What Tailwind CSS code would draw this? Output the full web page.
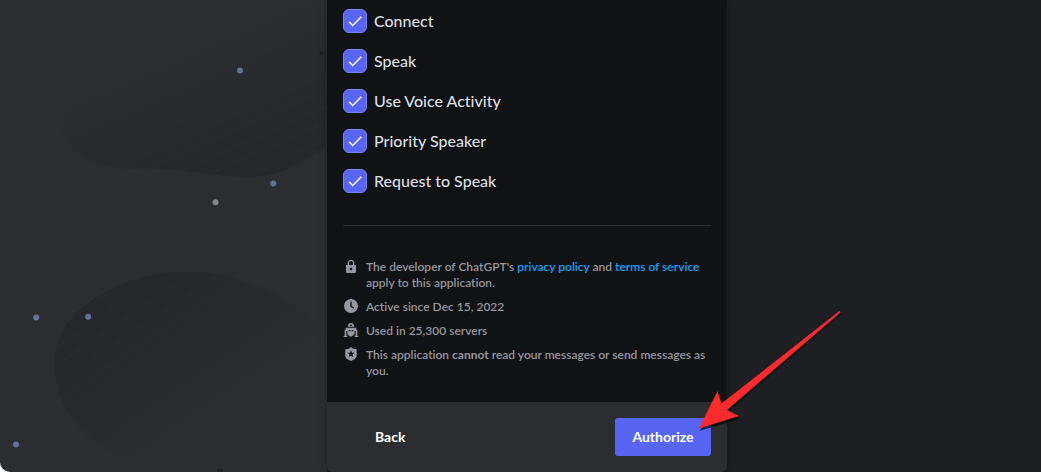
<!DOCTYPE html>
<html lang="en">
<head>
<meta charset="utf-8">
<meta name="viewport" content="width=device-width, initial-scale=1">
<title>Authorize application</title>
<script src="https://cdn.jsdelivr.net/npm/@tailwindcss/browser@4"></script>
</head>
<body class="bg-[#1e1f22]">
<div class="relative grid min-h-screen grid-cols-[327fr_400px_314fr] overflow-hidden bg-[#1e1f22] font-['Lato','Noto_Sans',sans-serif] [font-variant-ligatures:none]">
  <!-- Backdrop -->
  <div class="flex bg-white" aria-hidden="true">
  <div class="relative grow overflow-hidden rounded-bl-[10px] bg-[#2c2d31]">
    <svg class="absolute bottom-0 right-0 h-[472px] w-[327px]" viewBox="0 0 327 472" fill="none">
      <defs>
        <linearGradient id="g1" gradientUnits="userSpaceOnUse" x1="245" y1="185" x2="185" y2="45"><stop stop-color="#26272b"/><stop offset="1" stop-color="#2c2d31"/></linearGradient>
        <linearGradient id="g2" gradientUnits="userSpaceOnUse" x1="105" y1="295" x2="200" y2="430"><stop stop-color="#26272b"/><stop offset="1" stop-color="#2c2d31"/></linearGradient>
        <pattern id="s1" width="400" height="30" patternUnits="userSpaceOnUse" patternTransform="rotate(-24)"><path d="M0 4h400M0 20h400" stroke="#303135" stroke-opacity=".25" stroke-width="2"/></pattern>
        <pattern id="s2" width="400" height="30" patternUnits="userSpaceOnUse" patternTransform="rotate(-34)"><path d="M0 4h400M0 20h400" stroke="#303135" stroke-opacity=".25" stroke-width="2"/></pattern>
        <path id="b1" d="M327 0H285L60 110C55 135 75 168 130 169C180 167 212 177 250 177C283 176 303 164 327 145Z"/>
        <path id="b2" d="M54.500 368C54 325 78 308 110 289C150 269 202 267 240 280C285 294 322 318 327 345L150 465C95 455 56 415 54.500 368Z"/>
      </defs>
      <use href="#b1" fill="url(#g1)"/><use href="#b1" fill="url(#s1)"/>
      <use href="#b2" fill="url(#g2)"/><use href="#b2" fill="url(#s2)"/>
      <g fill="#64709b">
        <circle cx="240" cy="70.500" r="3"/><circle cx="273.300" cy="183.500" r="3"/><circle cx="36.200" cy="317.600" r="3"/><circle cx="88.200" cy="316.700" r="3"/><circle cx="16" cy="444.500" r="3"/>
      </g>
      <circle cx="215.500" cy="202.300" r="3" fill="#85868d"/>
      <circle cx="321.700" cy="53.500" r="2" fill="#1f2023"/><circle cx="220" cy="471.500" r="3" fill="#1f2023"/>
    </svg>
  </div>
  </div>

  <!-- Authorization panel -->
  <main class="z-10 flex flex-col overflow-hidden rounded-b-[5px] bg-[#111214] shadow-[0_2px_10px_rgba(0,0,0,0.2)]">
    <div class="flex grow flex-col px-4">
      <ul class="flex flex-col gap-4 border-b border-[#2e2f33] pt-[9px] pb-8 text-base leading-6 font-medium text-[#dcdee1]">
        <li><label class="flex items-center gap-[7px]"><span class="relative size-6"><input type="checkbox" checked class="block size-6 appearance-none rounded-[6px] border border-[#7b84f7] bg-[#5865f2]"><svg class="pointer-events-none absolute inset-0" viewBox="0 0 24 24" fill="none" stroke="#fff" stroke-width="1.500"><path d="M6 12.800 9.700 16.500 18.300 7.800"/></svg></span><span>Connect</span></label></li>
        <li><label class="flex items-center gap-[7px]"><span class="relative size-6"><input type="checkbox" checked class="block size-6 appearance-none rounded-[6px] border border-[#7b84f7] bg-[#5865f2]"><svg class="pointer-events-none absolute inset-0" viewBox="0 0 24 24" fill="none" stroke="#fff" stroke-width="1.500"><path d="M6 12.800 9.700 16.500 18.300 7.800"/></svg></span><span>Speak</span></label></li>
        <li><label class="flex items-center gap-[7px]"><span class="relative size-6"><input type="checkbox" checked class="block size-6 appearance-none rounded-[6px] border border-[#7b84f7] bg-[#5865f2]"><svg class="pointer-events-none absolute inset-0" viewBox="0 0 24 24" fill="none" stroke="#fff" stroke-width="1.500"><path d="M6 12.800 9.700 16.500 18.300 7.800"/></svg></span><span>Use Voice Activity</span></label></li>
        <li><label class="flex items-center gap-[7px]"><span class="relative size-6"><input type="checkbox" checked class="block size-6 appearance-none rounded-[6px] border border-[#7b84f7] bg-[#5865f2]"><svg class="pointer-events-none absolute inset-0" viewBox="0 0 24 24" fill="none" stroke="#fff" stroke-width="1.500"><path d="M6 12.800 9.700 16.500 18.300 7.800"/></svg></span><span>Priority Speaker</span></label></li>
        <li><label class="flex items-center gap-[7px]"><span class="relative size-6"><input type="checkbox" checked class="block size-6 appearance-none rounded-[6px] border border-[#7b84f7] bg-[#5865f2]"><svg class="pointer-events-none absolute inset-0" viewBox="0 0 24 24" fill="none" stroke="#fff" stroke-width="1.500"><path d="M6 12.800 9.700 16.500 18.300 7.800"/></svg></span><span>Request to Speak</span></label></li>
      </ul>
      <ul class="flex flex-col gap-2 pt-[33px] pb-[23px] text-xs leading-4 font-semibold text-[#96979f]">
        <li class="flex gap-[7px]">
          <svg class="size-4 shrink-0" viewBox="0 0 24 24" fill="currentColor" aria-hidden="true"><path fill-rule="evenodd" d="M17 9V6.500C17 3 15.100 1 12 1S7 3 7 6.500V9H4.500v10a2 2 0 0 0 2 2h11a2 2 0 0 0 2-2V9H17ZM12 17a2 2 0 1 1 0-4 2 2 0 0 1 0 4ZM15 9H9V6.500c0-2.200 1-3.500 3-3.500s3 1.300 3 3.500V9Z"/></svg>
          <p>The developer of ChatGPT's <a href="#privacy" class="text-[#1ba0f5]">privacy policy</a> and <a href="#terms" class="text-[#1ba0f5]">terms of service</a> apply to this application.</p>
        </li>
        <li class="flex gap-[7px]">
          <svg class="size-4 shrink-0" viewBox="0 0 24 24" fill="currentColor" aria-hidden="true"><path fill-rule="evenodd" d="M12 0a10.500 10.500 0 1 0 0 21 10.500 10.500 0 0 0 0-21Zm-1 4h2v6.500l4 2.500-1 1.700-5-3.200V4Z"/></svg>
          <p>Active since Dec 15, 2022</p>
        </li>
        <li class="flex gap-[7px]">
          <svg class="size-4 shrink-0" viewBox="0 0 24 24" fill="currentColor" aria-hidden="true"><path fill-rule="evenodd" d="M12 0C9 0 7.300 2 7 5.500h10C16.700 2 15 0 12 0Zm-1.500 2.500h3v2h-3v-2ZM4 7h16v3h1.500v9H23v2h-5.500v-2H19v-7h-1.500v3c0 2.500-2.500 4.500-5.500 5.500-3-1-5.500-3-5.500-5.500v-3H5v7h1.500v2H1v-2h1.500v-9H4V7Zm4.500 3.500v2H11v-2H8.500Zm4.500 0v2h2.500v-2H13Z"/></svg>
          <p>Used in 25,300 servers</p>
        </li>
        <li class="flex gap-[7px]">
          <svg class="size-4 shrink-0" viewBox="0 0 24 24" fill="currentColor" aria-hidden="true"><path fill-rule="evenodd" d="M12 0 9 2.500 3.500 3.500V13c0 4 4.500 6 8.500 8 4-2 8.500-4 8.500-8V3.500L15 2.500 12 0Zm0 5 1.500 3.500 3.800.3-2.900 2.500.9 3.700-3.300-2-3.300 2 .9-3.700-2.900-2.500 3.800-.3L12 5Z"/></svg>
          <p>This application <strong class="font-bold">cannot</strong> read your messages or send messages as you.</p>
        </li>
      </ul>
    </div>
    <footer class="flex items-center justify-between bg-[#2c2d31] p-4 text-sm">
      <button type="button" class="h-[38px] px-8 font-bold text-white">Back</button>
      <button type="button" class="h-[38px] w-24 rounded-[3px] bg-[#5865f2] font-bold text-white">Authorize</button>
    </footer>
  </main>

  <!-- Arrow pointing at the confirm button -->
  <svg class="pointer-events-none absolute right-[191px] bottom-[32px] z-20 h-[140px] w-[160px]" viewBox="690 300 160 140" aria-hidden="true">
    <path d="M840 312.500 841 314 728 412 740 419 699 431 721 406Z" fill="#000" opacity=".65"/>
    <path d="M839.500 311 721.500 403.500 717.500 391 699 428.500 739 416 727 410 840.500 312.500Z" fill="#ff2a2c"/>
  </svg>
</div>
</body>
</html>
